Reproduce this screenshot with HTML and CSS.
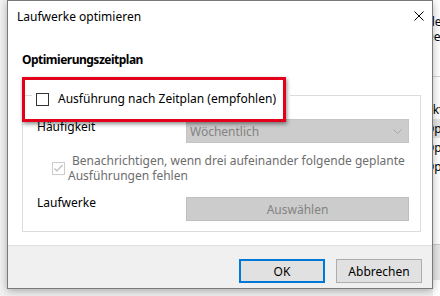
FILE: index.html
```html
<!DOCTYPE html>
<html lang="de">
<head>
    <meta charset="UTF-8">
    <meta name="viewport" content="width=device-width, initial-scale=1.0">
    <title>Laufwerke optimieren</title>
    <link rel="stylesheet" href="styles.css">
</head>
<body>
    <div class="desktop">
        <div class="dialog">
            <div class="titlebar">
                <span class="title">Laufwerke optimieren</span>
                <button class="close-button" title="Schließen">
                    <svg width="10" height="10" viewBox="0 0 10 10">
                        <path d="M0.5 0.5 L9.5 9.5 M9.5 0.5 L0.5 9.5" stroke="#000" stroke-width="1" fill="none"/>
                    </svg>
                </button>
            </div>

            <div class="content">
                <h3 class="section-title">Optimierungszeitplan</h3>

                <fieldset class="group">
                    <legend class="group-header">
                        <label class="check">
                            <svg class="checkbox" width="13" height="13" viewBox="0 0 13 13">
                                <rect x="0.5" y="0.5" width="12" height="12" fill="#fff" stroke="#333"/>
                            </svg>
                            <span>Ausführung nach Zeitplan (empfohlen)</span>
                        </label>
                    </legend>

                    <div class="row frequency-row">
                        <span class="row-label">Häufigkeit</span>
                        <div class="select">
                            <span>Wöchentlich</span>
                            <svg width="9" height="5" viewBox="0 0 9 5">
                                <polyline points="0.5,0.5 4.5,4.5 8.5,0.5" fill="none" stroke="#a8a8a8"/>
                            </svg>
                        </div>
                    </div>

                    <div class="row notify-row">
                        <svg class="checkbox" width="13" height="13" viewBox="0 0 13 13">
                            <rect x="0.5" y="0.5" width="12" height="12" fill="#fff" stroke="#cccccc"/>
                            <polyline points="2.5,6.5 5,9 10.5,3" fill="none" stroke="#bcbcbc" stroke-width="1.2"/>
                        </svg>
                        <span class="notify-text">Benachrichtigen, wenn drei aufeinander folgende geplante<br>Ausführungen fehlen</span>
                    </div>

                    <div class="row drives-row">
                        <span class="row-label">Laufwerke</span>
                        <button class="wide-button" disabled>Auswählen</button>
                    </div>
                </fieldset>
            </div>

            <div class="footer">
                <button class="dialog-button default">OK</button>
                <button class="dialog-button">Abbrechen</button>
            </div>

            <!-- Markierung im Screenshot -->
            <div class="highlight"></div>
        </div>

        <div class="behind">
            <div class="behind-line">Elemente werden angezeigt</div>
            <div class="behind-line">Der Computer wird optimiert</div>
            <div class="behind-rule"></div>
            <div class="behind-list">
                <div class="behind-row">Aktueller Status</div>
                <div class="behind-row selected">Optimiert</div>
                <div class="behind-row">Optimiert</div>
                <div class="behind-row">Optimiert</div>
            </div>
            <div class="behind-status"></div>
        </div>
    </div>
</body>
</html>
```

FILE: styles.css
```css
body {
    margin: 0;
    height: 296px;
    overflow: hidden;
    background: #f2f2f2;
    font-family: "Noto Sans", "Liberation Sans", sans-serif;
    font-size: 12px;
    color: #000;
}

.desktop {
    display: flex;
    align-items: flex-start;
    height: 296px;
    padding-left: 7px;
}

.dialog {
    position: relative;
    z-index: 1;
    width: 426px;
    height: 289px;
    box-sizing: border-box;
    border: 1px solid #7a7a7a;
    background: #fff;
    box-shadow: 0 2px 8px rgba(0,0,0,0.3);
    display: flex;
    flex-direction: column;
    flex-shrink: 0;
}

.titlebar {
    height: 30px;
    display: flex;
    align-items: center;
    justify-content: space-between;
    padding-left: 9px;
}

.close-button {
    width: 26px;
    height: 30px;
    padding: 0;
    border: none;
    background: none;
    display: flex;
    align-items: center;
    justify-content: center;
}

.content {
    flex: 1;
    padding: 21px 11px 0 14px;
}

.section-title {
    margin: 0;
    font-size: 12px;
    font-weight: bold;
    line-height: 16px;
    letter-spacing: -0.5px;
}

.group {
    margin: 15px 0 0;
    padding: 0 11px 10px 14px;
    border: 1px solid #dcdcdc;
    min-width: 0;
}

.group-header {
    margin-left: -5px;
    padding: 8px 14px 0 4px;
    line-height: 16px;
}

.check {
    display: flex;
    align-items: center;
    gap: 9px;
}

.checkbox {
    flex-shrink: 0;
    display: block;
}

.row {
    display: flex;
    align-items: flex-start;
}

.row-label {
    width: 149px;
    line-height: 16px;
}

.frequency-row { margin-top: 12px; }
.drives-row { margin-top: 14px; }
.drives-row .row-label { margin-top: -2px; }

.select {
    width: 223px;
    height: 24px;
    box-sizing: border-box;
    border: 1px solid #c4c4c4;
    background: #cccccc;
    color: #838383;
    display: flex;
    align-items: center;
    justify-content: space-between;
    padding: 0 6px 0 3px;
}

.notify-row {
    margin-top: 10px;
    align-items: center;
    padding-left: 15px;
}

.notify-text {
    margin-left: 3px;
    line-height: 15px;
    color: #6d6d6d;
    text-indent: 4px;
}

.wide-button {
    width: 223px;
    height: 24px;
    padding: 0;
    border: 1px solid #bfbfbf;
    background: #cccccc;
    color: #838383;
    font: inherit;
}

.footer {
    height: 43px;
    box-sizing: border-box;
    border-top: 1px solid #dfdfdf;
    background: #f0f0f0;
    display: flex;
    justify-content: flex-end;
    gap: 11px;
    padding: 13px 10px 0 0;
}

.dialog-button {
    width: 86px;
    height: 24px;
    padding: 0;
    border: 1px solid #adadad;
    background: #e1e1e1;
    color: #000;
    font: inherit;
}

.dialog-button.default {
    border: 2px solid #0078d7;
}

/* roter Rahmen ueber der Gruppe */
.highlight {
    position: absolute;
    left: 14px;
    top: 76px;
    width: 264px;
    height: 45px;
    box-sizing: border-box;
    border: 3px solid #e3001b;
    box-shadow: 1px 2px 4px rgba(0,0,0,0.45);
    pointer-events: none;
}

.behind {
    flex: 1;
    height: 296px;
    overflow: hidden;
    background: #fff;
    display: flex;
    flex-direction: column;
    padding-top: 14px;
    box-sizing: border-box;
}

.behind-line,
.behind-row {
    margin-left: -8px;
    white-space: nowrap;
}

.behind-line {
    height: 15px;
    line-height: 15px;
}

.behind-rule {
    margin-top: 32px;
    border-top: 1px solid #d5d5d5;
}

.behind-list {
    margin-top: 23px;
}

.behind-row {
    height: 19px;
    line-height: 19px;
}

.behind-row.selected {
    background: #e5e5e5;
}

.behind-status {
    margin-top: auto;
    margin-bottom: 16px;
    height: 35px;
    border-top: 1px solid #cccccc;
    background: #e6e6e6;
}
```
